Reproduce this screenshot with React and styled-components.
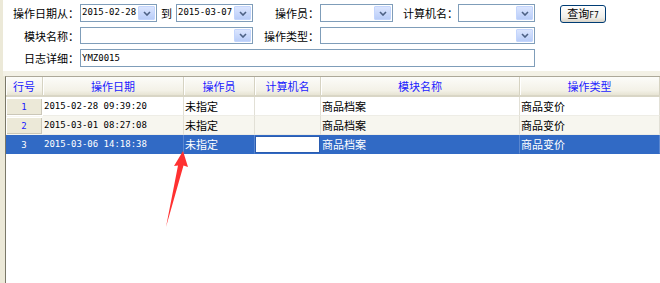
import React from "react";
import styled, { createGlobalStyle } from "styled-components";

const GlobalStyle = createGlobalStyle`
  html, body {
    margin: 0;
    padding: 0;
  }
  body {
    background: #ece9d8;
    color: #000;
    font-family: "Noto Sans CJK SC", sans-serif;
    font-size: 11px;
  }
`;

const MONO = `"DejaVu Sans Mono", "Noto Sans CJK SC", monospace`;
const CJK = `"Noto Sans CJK SC", sans-serif`;

const Window = styled.div`
  position: relative;
  width: 660px;
  height: 283px;
  box-sizing: border-box;
  padding-left: 3px;
  display: flex;
  flex-direction: column;
  background: #ece9d8;
  overflow: hidden;
`;

// top filter panel
const FilterPanel = styled.div`
  height: 71px;
  box-sizing: border-box;
  padding-top: 4px;
  background: #ffffff;
  display: grid;
  grid-template-columns: 77px 173px 67px 215px auto;
  grid-template-rows: 18px 17px 18px;
  row-gap: 5px;
  align-content: start;
`;

const Label = styled.span`
  grid-column: ${({ $col }) => $col || "auto"};
  justify-self: end;
  align-self: center;
  padding-right: 1px;
  font-family: ${CJK};
  font-size: 11px;
  line-height: 14px;
  white-space: nowrap;
`;

const FieldGroup = styled.div`
  display: flex;
  align-items: stretch;
  justify-content: ${({ $spread }) => ($spread ? "space-between" : "flex-start")};
  min-width: 0;
`;

const Combo = styled.div`
  width: ${({ $width }) => ($width ? `${$width}px` : "100%")};
  height: 100%;
  box-sizing: border-box;
  border: 1px solid #7f9db9;
  background: #ffffff;
  display: flex;
  align-items: stretch;
  flex-shrink: 0;
  margin-left: ${({ $gap }) => ($gap ? `${$gap}px` : 0)};
`;

const ComboText = styled.span`
  flex: 1;
  padding-left: 1px;
  font-family: ${MONO};
  font-size: 9px;
  line-height: 15px;
  white-space: nowrap;
  overflow: hidden;
`;

const DropButton = styled.span`
  width: 17px;
  margin: 1px;
  box-sizing: border-box;
  border: 1px solid #c3d5fd;
  border-radius: 1px;
  background: linear-gradient(#dbe5fe, #b9cdf8);
  display: flex;
  align-items: center;
  justify-content: center;
`;

const InlineLabel = styled.span`
  align-self: center;
  font-family: ${CJK};
  font-size: 11px;
  line-height: 14px;
  white-space: nowrap;
  margin-left: ${({ $gap }) => ($gap ? `${$gap}px` : 0)};
`;

const TextInput = styled.div`
  grid-column: 2 / 5;
  box-sizing: border-box;
  border: 1px solid #7f9db9;
  background: #ffffff;
  padding-left: 1px;
  font-family: ${MONO};
  font-size: 9px;
  line-height: 16px;
`;

const QueryButton = styled.button`
  display: block;
  margin: 1px 0 0 25px;
  width: 46px;
  height: 18px;
  padding: 0;
  box-sizing: border-box;
  border: 1px solid #003c74;
  border-radius: 3px;
  background: linear-gradient(#ffffff, #f0efea 70%, #d8d3c7);
  color: #000;
  font-family: ${CJK};
  font-size: 11px;
  line-height: 15px;
  text-align: center;
  white-space: nowrap;
  span {
    font-family: ${MONO};
    font-size: 8px;
    vertical-align: baseline;
  }
`;

const Splitter = styled.div`
  height: 5px;
  background: #f3f1e6;
`;

// data grid
const DataGrid = styled.div`
  flex: 1;
  margin-left: 2px;
  border-left: 1px solid #7a7868;
  border-top: 1px solid #aca899;
  background: #ffffff;
`;

const GRID_COLUMNS = "37px 141px 71px 66px 199px 1fr";

const HeaderRow = styled.div`
  display: grid;
  grid-template-columns: ${GRID_COLUMNS};
  height: 20px;
  box-sizing: border-box;
  border-bottom: 2px solid #d9d6c6;
`;

const HeaderCell = styled.div`
  background: linear-gradient(#fcfcf9, #f3f1e7 75%, #e7e4d4);
  border-right: 1px solid #d6d3c2;
  box-shadow: inset 1px 0 #ffffff;
  color: #1a1aff;
  font-family: ${CJK};
  font-size: 11px;
  display: flex;
  align-items: center;
  justify-content: center;
`;

const ROW_BG = {
  plain: "#ffffff",
  alt: "#f7f6ef",
  selected: "#316ac5",
};

const Row = styled.div`
  display: grid;
  grid-template-columns: ${GRID_COLUMNS};
  height: 19px;
  background: ${({ $variant }) => ROW_BG[$variant]};
  color: ${({ $variant }) => ($variant === "selected" ? "#ffffff" : "#000000")};
`;

const Cell = styled.div`
  box-sizing: border-box;
  padding-left: 1px;
  border-right: 1px solid ${({ $selected }) => ($selected ? "#5a87d0" : "#e2e0d6")};
  border-bottom: 1px solid ${({ $selected }) => ($selected ? "#316ac5" : "#eeede6")};
  font-family: ${({ $mono }) => ($mono ? MONO : CJK)};
  font-size: ${({ $mono }) => ($mono ? "9px" : "11px")};
  white-space: nowrap;
  overflow: hidden;
  display: flex;
  align-items: center;
`;

const EditorCell = styled.div`
  margin: 1px 1px 1px 0;
  border: 1px solid #2a5cb0;
  background: #ffffff;
`;

const RowNumber = styled.div`
  margin: 1px 1px 1px 0;
  background: ${({ $selected }) => ($selected ? "#316ac5" : "#ece9d8")};
  box-shadow: ${({ $selected }) =>
    $selected ? "none" : "inset 1px 1px #ffffff, inset -1px -1px #cbc7b8"};
  color: ${({ $selected }) => ($selected ? "#ffffff" : "#1a1aff")};
  font-family: ${MONO};
  font-size: 9px;
  display: flex;
  align-items: center;
  justify-content: center;
`;

const Annotation = styled.svg`
  position: absolute;
  left: 163px;
  top: 150px;
  pointer-events: none;
`;

const Chevron = () => (
  <svg width="8" height="5" viewBox="0 0 8 5">
    <path d="M1 1 L4 4 L7 1" fill="none" stroke="#4d6185" strokeWidth="1.6" />
  </svg>
);

const ComboBox = ({ value, width, gap }) => (
  <Combo $width={width} $gap={gap}>
    <ComboText>{value}</ComboText>
    <DropButton>
      <Chevron />
    </DropButton>
  </Combo>
);

const columns = ["行号", "操作日期", "操作员", "计算机名", "模块名称", "操作类型"];

const logs = [
  { time: "2015-02-28 09:39:20", user: "未指定", host: "", module: "商品档案", type: "商品变价" },
  { time: "2015-03-01 08:27:08", user: "未指定", host: "", module: "商品档案", type: "商品变价" },
  { time: "2015-03-06 14:18:38", user: "未指定", host: "", module: "商品档案", type: "商品变价" },
];

const SELECTED = 2;

export default function App() {
  return (
    <>
      <GlobalStyle />
      <Window>
        <FilterPanel>
          <Label $col={1}>操作日期从：</Label>
          <FieldGroup $spread>
            <ComboBox value="2015-02-28" width={77} />
            <InlineLabel>到</InlineLabel>
            <ComboBox value="2015-03-07" width={77} />
          </FieldGroup>
          <Label>操作员：</Label>
          <FieldGroup>
            <ComboBox width={73} />
            <InlineLabel $gap={10}>计算机名：</InlineLabel>
            <ComboBox width={77} />
          </FieldGroup>
          <QueryButton>
            查询<span>F7</span>
          </QueryButton>

          <Label $col={1}>模块名称：</Label>
          <ComboBox />
          <Label>操作类型：</Label>
          <ComboBox />

          <Label $col={1}>日志详细：</Label>
          <TextInput>YMZ0015</TextInput>
        </FilterPanel>

        <Splitter />

        <DataGrid>
          <HeaderRow>
            {columns.map((title) => (
              <HeaderCell key={title}>{title}</HeaderCell>
            ))}
          </HeaderRow>
          {logs.map((log, i) => {
            const selected = i === SELECTED;
            const variant = selected ? "selected" : i % 2 ? "alt" : "plain";
            return (
              <Row key={log.time} $variant={variant}>
                <RowNumber $selected={selected}>{i + 1}</RowNumber>
                <Cell $mono $selected={selected}>{log.time}</Cell>
                <Cell $selected={selected}>{log.user}</Cell>
                {selected ? <EditorCell /> : <Cell>{log.host}</Cell>}
                <Cell $selected={selected}>{log.module}</Cell>
                <Cell $selected={selected}>{log.type}</Cell>
              </Row>
            );
          })}
        </DataGrid>

        <Annotation width="27" height="79" viewBox="0 0 27 79">
          <polygon points="20,1 25,17 20.5,15.5 3,77 15,15.5 11,16" fill="#ff3131" />
        </Annotation>
      </Window>
    </>
  );
}
